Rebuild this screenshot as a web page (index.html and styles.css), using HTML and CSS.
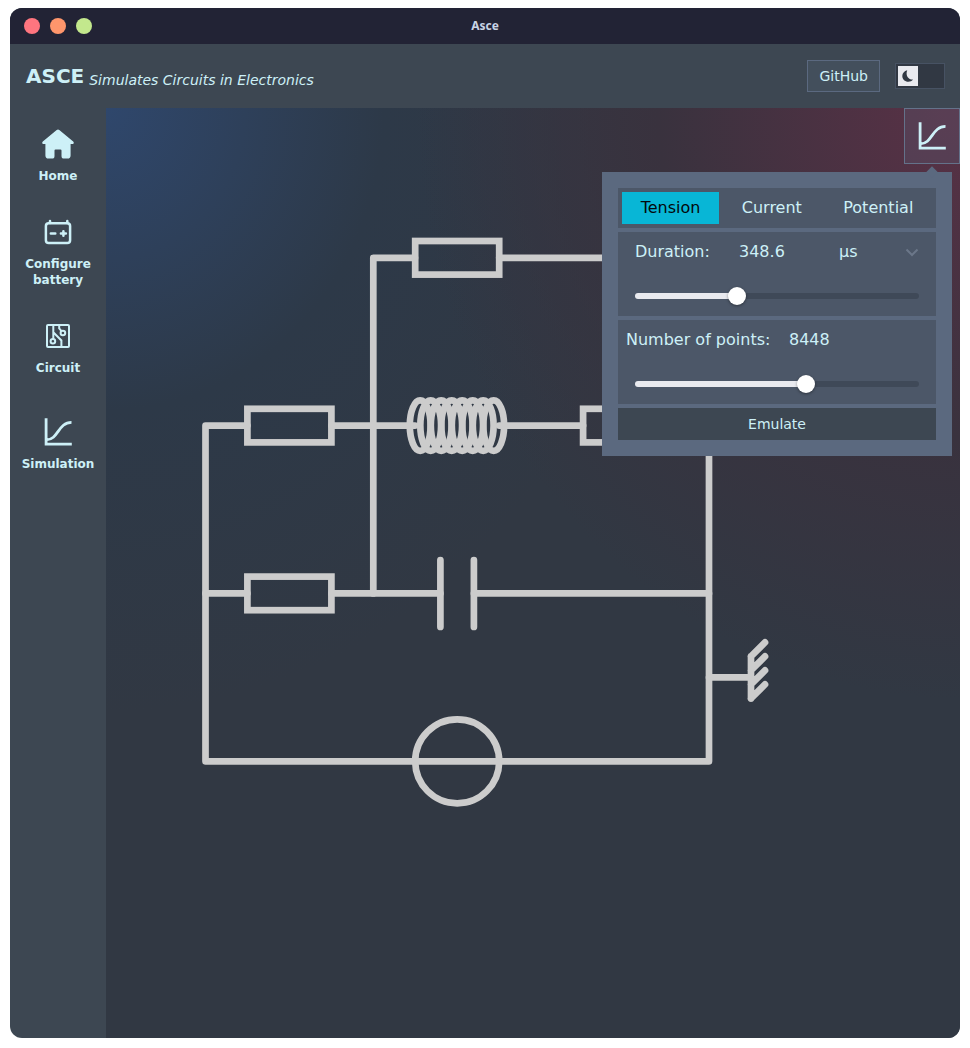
FILE: index.html
```html
<!DOCTYPE html>
<html lang="en">
<head>
<meta charset="utf-8">
<meta name="viewport" content="width=device-width, initial-scale=1">
<title>Asce</title>
<link rel="stylesheet" href="styles.css">
</head>
<body>
<svg class="defs" width="0" height="0" aria-hidden="true">
  <symbol id="curve" viewBox="0 0 32 32">
    <path d="M4.100 2.200V28.200H29.800M4.300 23.800C16.500 23.800 16 6.400 29.500 6.400" fill="none" stroke="currentColor" stroke-width="2.800"/>
  </symbol>
</svg>
<div class="window">
  <div class="titlebar">
    <div class="lights"><span class="light red"></span><span class="light orange"></span><span class="light green"></span></div>
    <span class="window-title">Asce</span>
  </div>
  <header class="header">
    <div class="brand">
      <h1 class="name">ASCE</h1>
      <p class="tagline">Simulates Circuits in Electronics</p>
    </div>
    <div class="header-actions">
      <button class="github" type="button">GitHub</button>
      <label class="theme">
        <input class="theme-input" type="checkbox" role="switch" aria-label="Light theme">
        <span class="theme-knob">
          <svg width="16" height="16" viewBox="0 0 16 16" aria-hidden="true"><path d="M7.200 2.200C4.200 3 2.300 5.300 2.300 8c0 3.300 2.700 5.800 6 5.800 2 0 3.700-.8 4.700-2.200C8.500 11.800 5.200 7.500 7.200 2.200Z" fill="#313843"/></svg>
        </span>
      </label>
    </div>
  </header>
  <div class="body">
    <nav class="sidebar">
      <a class="item" href="#home">
        <svg class="icon" viewBox="0 0 32 32" aria-hidden="true"><path d="M14.700 1.900Q16 .9 17.300 1.900L31.200 13.400Q32.500 14.900 31 16H28.600V27.500Q28.600 30.600 25.500 30.600H22Q19.500 30.600 19.500 28V22.500Q19.500 21.500 18.500 21.500H13.500Q12.500 21.500 12.500 22.500V28Q12.500 30.600 10 30.600H6.500Q3.400 30.600 3.400 27.500V16H1Q-.5 14.900 .8 13.400Z" fill="currentColor"/></svg>
        <span>Home</span>
      </a>
      <a class="item" href="#battery">
        <svg class="icon" viewBox="0 0 32 32" aria-hidden="true">
          <g fill="none" stroke="currentColor" stroke-width="2.500" stroke-linecap="round">
            <rect x="3.900" y="7.300" width="24.200" height="19.700" rx="2.800"/>
            <path d="M8 7V5M25.300 7V5M8.800 17.500h4.500M18.900 17.500h5M21.400 15.200v4.600"/>
          </g>
        </svg>
        <span>Configure battery</span>
      </a>
      <a class="item" href="#circuit">
        <svg class="icon" viewBox="0 0 32 32" aria-hidden="true">
          <g fill="none" stroke="currentColor" stroke-width="2">
            <rect x="5" y="5" width="22" height="22" rx="1"/>
            <circle cx="20.900" cy="13" r="2.300"/>
            <circle cx="10.900" cy="21.200" r="2.300"/>
            <path d="M11.300 5V18.900M11.300 12.300L19.400 20.500V27M17.200 5V8.500L19.500 11.200"/>
          </g>
        </svg>
        <span>Circuit</span>
      </a>
      <a class="item item-last" href="#simulation">
        <svg class="icon" aria-hidden="true"><use href="#curve"/></svg>
        <span>Simulation</span>
      </a>
    </nav>
    <main class="board">
      <svg class="circuit" width="854" height="930" viewBox="106 108 854 930" role="img" aria-label="Circuit diagram">
        <g fill="none" stroke="#ccc" stroke-width="6.700" stroke-linecap="round">
          <path stroke-linejoin="round" d="M373.300 593.400V257.800H415M499.200 257.800H709V761.300H205.500V425.600H247.400M331.400 425.600H415M499.200 425.600H583.100M667 425.600H709"/>
          <path d="M205.500 593.400H247.400M331.400 593.400H440.400M473.900 593.400H709"/>
          <rect x="415.200" y="241" width="84" height="33.600"/>
          <rect x="247.400" y="408.800" width="84" height="33.600"/>
          <rect x="583.100" y="408.800" width="84" height="33.600"/>
          <rect x="247.400" y="576.600" width="84" height="33.600"/>
          <path d="M440.400 560V627M473.900 560V627"/>
          <circle cx="457.200" cy="761.300" r="42"/>
          <ellipse cx="420.200" cy="425.600" rx="10.400" ry="25.200"/>
          <ellipse cx="430.700" cy="425.600" rx="10.400" ry="25.200"/>
          <ellipse cx="441.200" cy="425.600" rx="10.400" ry="25.200"/>
          <ellipse cx="451.700" cy="425.600" rx="10.400" ry="25.200"/>
          <ellipse cx="462.200" cy="425.600" rx="10.400" ry="25.200"/>
          <ellipse cx="472.700" cy="425.600" rx="10.400" ry="25.200"/>
          <ellipse cx="483.200" cy="425.600" rx="10.400" ry="25.200"/>
          <ellipse cx="493.700" cy="425.600" rx="10.400" ry="25.200"/>
          <path d="M709 677.400H751M751 656.400V698.400M751 656.400L765 642.400M751 670.400L765 656.400M751 684.400L765 670.400M751 698.400L765 684.400"/>
        </g>
      </svg>
      <div class="overlay">
        <button class="open" type="button" aria-label="Simulation settings"><svg class="icon" aria-hidden="true"><use href="#curve"/></svg></button>
        <form class="panel">
          <div class="tabs" role="tablist">
            <button class="tab tab-active" type="button" role="tab" aria-selected="true">Tension</button>
            <button class="tab" type="button" role="tab" aria-selected="false">Current</button>
            <button class="tab" type="button" role="tab" aria-selected="false">Potential</button>
          </div>
          <div class="card">
            <div class="row row-duration">
              <label for="duration">Duration:</label>
              <input class="value" id="duration" type="text" value="348.6">
              <div class="unit">
                <select class="unit-select" aria-label="Unit"><option>µs</option><option>ms</option><option>s</option></select>
                <svg class="chevron" width="16" height="16" viewBox="0 0 16 16" aria-hidden="true"><path d="M2.500 5.500L8 11l5.500-5.500" fill="none" stroke="#6b7789" stroke-width="2"/></svg>
              </div>
            </div>
            <input class="slider" type="range" min="0" max="100" value="35" aria-label="Duration" style="--fill: 36%">
          </div>
          <div class="card">
            <div class="row row-points">
              <label for="points">Number of points:</label>
              <input class="value" id="points" type="text" value="8448">
            </div>
            <input class="slider" type="range" min="0" max="100" value="61" aria-label="Number of points" style="--fill: 60%">
          </div>
          <button class="emulate" type="button">Emulate</button>
        </form>
      </div>
    </main>
  </div>
</div>
</body>
</html>
```

FILE: styles.css
```css
* { box-sizing: border-box; }

body {
  margin: 0;
  padding: 8px 10px 10px;
  background: #fff;
  color: #cdf0f7;
  font: 16px/24px "DejaVu Sans", sans-serif;
}

button, input, select {
  margin: 0;
  padding: 0;
  border: 0;
  border-radius: 0;
  background: none;
  color: inherit;
  font: inherit;
}

.defs { position: absolute; }

.window {
  display: flex;
  flex-direction: column;
  min-height: calc(100vh - 18px);
  overflow: hidden;
  border-radius: 12px;
  background: #3d4752;
}

.titlebar {
  display: grid;
  grid-template-columns: 1fr auto 1fr;
  align-items: center;
  height: 36px;
  padding: 0 14px;
  background: #222335;
}

.lights { display: flex; gap: 10px; }
.light { width: 16px; height: 16px; border-radius: 50%; }
.red { background: #ff757f; }
.orange { background: #ff966c; }
.green { background: #c3e88d; }

.window-title {
  color: #c8d3e5;
  font: 700 12px/16px "Noto Sans", sans-serif;
}

.header {
  display: flex;
  align-items: center;
  justify-content: space-between;
  height: 64px;
  padding: 0 15px 0 16px;
}

.brand { display: flex; align-items: flex-end; gap: 5px; }
.name { margin: 0; font-size: 20px; line-height: 28px; }
.tagline { margin: 0; font-size: 14px; line-height: 20px; font-style: italic; }

.header-actions { display: flex; align-items: center; gap: 15px; }

.github {
  height: 32px;
  padding: 0 11px;
  border: 1px solid #5b6980;
  background: #434f5c;
  font-size: 14px;
}

.theme {
  display: flex;
  align-items: center;
  width: 50px;
  height: 26px;
  padding: 2px;
  border: 1px solid #475263;
  background: #313843;
}

.theme-input { appearance: none; width: 0; height: 0; }

.theme-knob {
  display: grid;
  place-items: center;
  width: 20px;
  height: 20px;
  background: #e9eaef;
}

.body { display: flex; flex: 1; }

.sidebar {
  display: flex;
  flex-direction: column;
  gap: 32px;
  flex: none;
  width: 96px;
  padding: 20px 8px;
}

.item {
  display: flex;
  flex-direction: column;
  align-items: center;
  gap: 8px;
  color: inherit;
  font-size: 12px;
  font-weight: 700;
  line-height: 16px;
  text-align: center;
  text-decoration: none;
}

.item-last { margin-top: 8px; }
.icon { display: block; width: 32px; height: 32px; }

.board {
  position: relative;
  flex: 1;
  min-width: 0;
  overflow: hidden;
  background:
    radial-gradient(at 100% 0, #5a3146 0, #39323e 25%, transparent 45%),
    radial-gradient(at 0 0, #2f476c 0, #2d3948 23%, transparent 46%),
    #313843;
}

.circuit { display: block; }

.overlay {
  position: absolute;
  top: 0;
  right: 0;
  display: flex;
  flex-direction: column;
  align-items: flex-end;
  gap: 8px;
}

.open {
  display: grid;
  place-items: center;
  width: 56px;
  height: 56px;
  border: 1px solid #64728a;
  background: rgba(91, 105, 128, 0.25);
}

.panel {
  position: relative;
  display: flex;
  flex-direction: column;
  gap: 4px;
  width: 350px;
  margin-right: 8px;
  padding: 16px;
  background: #5b697f;
}

.panel::before {
  content: "";
  position: absolute;
  top: -4px;
  right: 16px;
  width: 8px;
  height: 8px;
  background: #5b697f;
  transform: rotate(45deg);
}

.tabs {
  display: flex;
  gap: 4px;
  padding: 4px;
  background: #4c5768;
}

.tab { flex: auto; height: 32px; }
.tab-active { background: #08b6d6; color: #04090c; }

.card { height: 84px; background: #4c5768; }

.row {
  display: grid;
  align-items: center;
  height: 40px;
}

.row-duration { grid-template-columns: 104px 100px 1fr; padding: 0 16px 0 17px; }
.row-points { grid-template-columns: 163px 1fr; padding: 0 16px 0 8px; }

.value { width: 100%; min-width: 0; }

.unit { display: grid; align-items: center; }
.unit-select, .chevron { grid-area: 1 / 1; }
.unit-select { appearance: none; width: 100%; }
.chevron { justify-self: end; pointer-events: none; }

.slider {
  appearance: none;
  display: block;
  width: 284px;
  height: 18px;
  margin: 15px 17px;
}

.slider::-webkit-slider-runnable-track {
  height: 6px;
  border-radius: 3px;
  background: linear-gradient(to right, #e9eaef var(--fill), #3f4958 var(--fill));
}

.slider::-webkit-slider-thumb {
  appearance: none;
  width: 18px;
  height: 18px;
  margin-top: -6px;
  border-radius: 50%;
  background: #fff;
  box-shadow: 0 1px 3px rgba(0, 0, 0, 0.4);
}

.emulate { height: 32px; background: #3d4752; font-size: 14px; }
```
